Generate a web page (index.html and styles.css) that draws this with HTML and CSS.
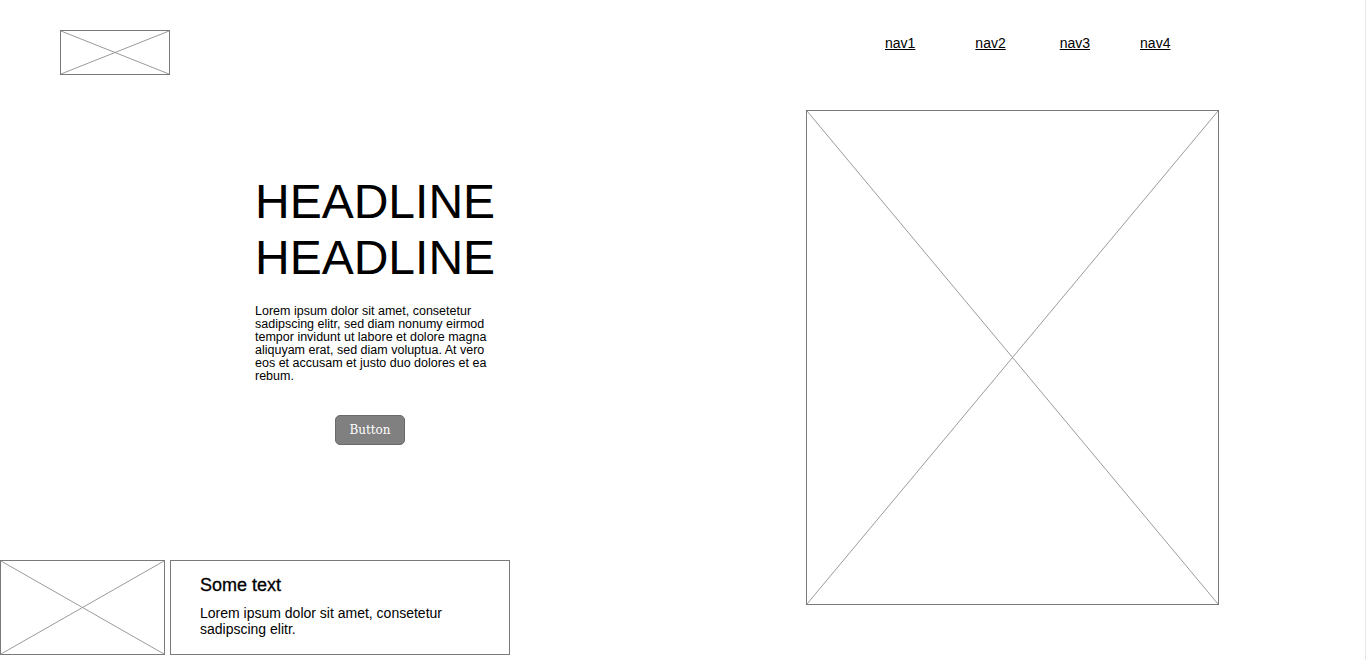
FILE: index.html
```html
<!DOCTYPE html>
<html lang="en">
<head>
<meta charset="utf-8">
<title>Wireframe</title>
<link rel="stylesheet" href="styles.css">
</head>
<body>
<div class="page">
  <div class="left">
    <div class="ph logo">
      <svg viewBox="0 0 100 100" preserveAspectRatio="none"><line x1="0" y1="0" x2="100" y2="100"/><line x1="100" y1="0" x2="0" y2="100"/></svg>
    </div>
    <section class="hero">
      <h1 class="headline">HEADLINE<br>HEADLINE</h1>
      <p class="lead">Lorem ipsum dolor sit amet, consetetur sadipscing elitr, sed diam nonumy eirmod tempor invidunt ut labore et dolore magna aliquyam erat, sed diam voluptua. At vero eos et accusam et justo duo dolores et ea rebum.</p>
      <button class="btn">Button</button>
    </section>
    <div class="cards">
      <div class="ph card-img">
        <svg viewBox="0 0 100 100" preserveAspectRatio="none"><line x1="0" y1="0" x2="100" y2="100"/><line x1="100" y1="0" x2="0" y2="100"/></svg>
      </div>
      <div class="card-text">
        <h2 class="card-title">Some text</h2>
        <p class="card-body">Lorem ipsum dolor sit amet, consetetur sadipscing elitr.</p>
      </div>
    </div>
  </div>
  <div class="right">
    <nav class="nav">
      <a href="#" class="nav-link n1">nav1</a>
      <a href="#" class="nav-link n2">nav2</a>
      <a href="#" class="nav-link n3">nav3</a>
      <a href="#" class="nav-link n4">nav4</a>
    </nav>
    <div class="ph big-img">
      <svg viewBox="0 0 100 100" preserveAspectRatio="none"><line x1="0" y1="0" x2="100" y2="100"/><line x1="100" y1="0" x2="0" y2="100"/></svg>
    </div>
  </div>
</div>
</body>
</html>
```
FILE: styles.css
```css
* { box-sizing: border-box; }
html, body { margin: 0; padding: 0; background: #fff; }
body { font-family: "Liberation Sans", Arial, sans-serif; color: #000; }

.page {
  width: 1366px;
  height: 660px;
  display: flex;
  border-right: 1px solid #e6e6e6;
  overflow: hidden;
}

.left {
  width: 806px;
  display: flex;
  flex-direction: column;
}

.ph {
  border: 1px solid #7a7a7a;
  background: #fff;
  position: relative;
}
.ph svg {
  display: block;
  width: 100%;
  height: 100%;
}
.ph svg line {
  stroke: #9a9a9a;
  stroke-width: 1;
  vector-effect: non-scaling-stroke;
}

.logo {
  width: 110px;
  height: 45px;
  margin: 30px 0 0 60px;
}

.hero {
  margin: 99px 0 0 255px;
  width: 245px;
  display: flex;
  flex-direction: column;
}
.headline {
  margin: 0;
  font-weight: normal;
  font-size: 48px;
  line-height: 56px;
}
.lead {
  margin: 19px 0 0;
  font-size: 12.5px;
  line-height: 13px;
  width: 240px;
}
.btn {
  margin: 32px 0 0 80px;
  width: 70px;
  height: 30px;
  background: #808080;
  border: 1px solid #6a6a6a;
  border-radius: 5px;
  color: #fff;
  font-family: "DejaVu Serif", "Liberation Serif", serif;
  font-size: 12px;
  padding: 0;
  align-self: flex-start;
}

.cards {
  margin-top: auto;
  margin-bottom: 5px;
  display: flex;
  gap: 5px;
  height: 95px;
}
.card-img {
  width: 165px;
  height: 95px;
}
.card-text {
  width: 340px;
  height: 95px;
  border: 1px solid #7a7a7a;
  padding: 14px 20px 0 29px;
}
.card-title {
  margin: 0;
  font-weight: normal;
  font-size: 18px;
  line-height: 20px;
  -webkit-text-stroke: 0.3px #000;
}
.card-body {
  margin: 10px 0 0;
  font-size: 14px;
  line-height: 16px;
}

.right {
  flex: 1;
  display: flex;
  flex-direction: column;
}
.nav {
  display: flex;
  margin-top: 35px;
  padding-left: 79px;
  height: 16px;
}
.nav-link {
  color: #000;
  font-size: 14px;
  line-height: 16px;
  text-decoration: underline;
}
.n2 { margin-left: 60px; }
.n3 { margin-left: 54px; }
.n4 { margin-left: 50px; }

.big-img {
  margin-top: 59px;
  width: 413px;
  height: 495px;
}
```
